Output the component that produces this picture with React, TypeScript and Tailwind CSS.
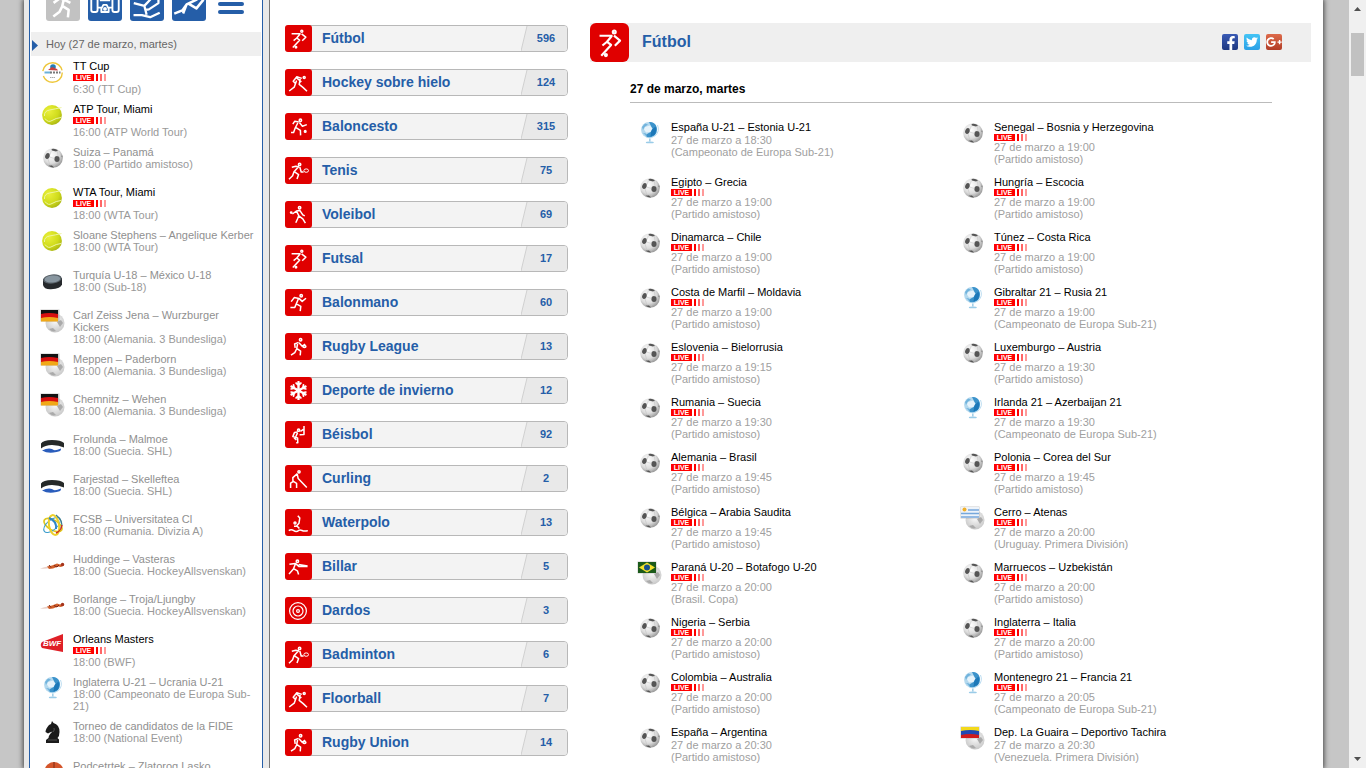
import React from 'react';
import { FaFacebookF, FaGooglePlusG, FaSnowflake, FaTwitter } from 'react-icons/fa';

type Emblem =
    | 'ball' | 'globe' | 'tennis' | 'puck' | 'de' | 'br' | 'uy' | 've'
    | 'shl' | 'orbit' | 'skater' | 'bwf' | 'knight' | 'basket' | 'ttcup';

interface Event {
    title: string;
    time: string;
    league: string;
    icon: Emblem;
    live?: boolean;
}

const today: Event[] = [
    { title: 'TT Cup', time: '6:30', league: 'TT Cup', icon: 'ttcup', live: true },
    { title: 'ATP Tour, Miami', time: '16:00', league: 'ATP World Tour', icon: 'tennis', live: true },
    { title: 'Suiza – Panamá', time: '18:00', league: 'Partido amistoso', icon: 'ball' },
    { title: 'WTA Tour, Miami', time: '18:00', league: 'WTA Tour', icon: 'tennis', live: true },
    { title: 'Sloane Stephens – Angelique Kerber', time: '18:00', league: 'WTA Tour', icon: 'tennis' },
    { title: 'Turquía U-18 – México U-18', time: '18:00', league: 'Sub-18', icon: 'puck' },
    { title: 'Carl Zeiss Jena – Wurzburger Kickers', time: '18:00', league: 'Alemania. 3 Bundesliga', icon: 'de' },
    { title: 'Meppen – Paderborn', time: '18:00', league: 'Alemania. 3 Bundesliga', icon: 'de' },
    { title: 'Chemnitz – Wehen', time: '18:00', league: 'Alemania. 3 Bundesliga', icon: 'de' },
    { title: 'Frolunda – Malmoe', time: '18:00', league: 'Suecia. SHL', icon: 'shl' },
    { title: 'Farjestad – Skelleftea', time: '18:00', league: 'Suecia. SHL', icon: 'shl' },
    { title: 'FCSB – Universitatea Cl', time: '18:00', league: 'Rumania. Divizia A', icon: 'orbit' },
    { title: 'Huddinge – Vasteras', time: '18:00', league: 'Suecia. HockeyAllsvenskan', icon: 'skater' },
    { title: 'Borlange – Troja/Ljungby', time: '18:00', league: 'Suecia. HockeyAllsvenskan', icon: 'skater' },
    { title: 'Orleans Masters', time: '18:00', league: 'BWF', icon: 'bwf', live: true },
    { title: 'Inglaterra U-21 – Ucrania U-21', time: '18:00', league: 'Campeonato de Europa Sub-21', icon: 'globe' },
    { title: 'Torneo de candidatos de la FIDE', time: '18:00', league: 'National Event', icon: 'knight' },
    { title: 'Podcetrtek – Zlatorog Lasko', time: '18:00', league: 'Eslovenia. 1. SKL', icon: 'basket' },
];

const categories: { name: string; count: number; icon: string }[] = [
    { name: 'Fútbol', count: 596, icon: 'football' },
    { name: 'Hockey sobre hielo', count: 124, icon: 'hockey' },
    { name: 'Baloncesto', count: 315, icon: 'basketball' },
    { name: 'Tenis', count: 75, icon: 'racket' },
    { name: 'Voleibol', count: 69, icon: 'volleyball' },
    { name: 'Futsal', count: 17, icon: 'football' },
    { name: 'Balonmano', count: 60, icon: 'handball' },
    { name: 'Rugby League', count: 13, icon: 'rugby' },
    { name: 'Deporte de invierno', count: 12, icon: 'winter' },
    { name: 'Béisbol', count: 92, icon: 'baseball' },
    { name: 'Curling', count: 2, icon: 'curling' },
    { name: 'Waterpolo', count: 13, icon: 'waterpolo' },
    { name: 'Billar', count: 5, icon: 'billiards' },
    { name: 'Dardos', count: 3, icon: 'darts' },
    { name: 'Badminton', count: 6, icon: 'racket' },
    { name: 'Floorball', count: 7, icon: 'hockey' },
    { name: 'Rugby Union', count: 14, icon: 'rugby' },
];

const friendly = 'Partido amistoso';
const sub21 = 'Campeonato de Europa Sub-21';

const matches: Event[] = [
    { title: 'España U-21 – Estonia U-21', time: '18:30', league: sub21, icon: 'globe' },
    { title: 'Senegal – Bosnia y Herzegovina', time: '19:00', league: friendly, icon: 'ball', live: true },
    { title: 'Egipto – Grecia', time: '19:00', league: friendly, icon: 'ball', live: true },
    { title: 'Hungría – Escocia', time: '19:00', league: friendly, icon: 'ball', live: true },
    { title: 'Dinamarca – Chile', time: '19:00', league: friendly, icon: 'ball', live: true },
    { title: 'Túnez – Costa Rica', time: '19:00', league: friendly, icon: 'ball', live: true },
    { title: 'Costa de Marfil – Moldavia', time: '19:00', league: friendly, icon: 'ball', live: true },
    { title: 'Gibraltar 21 – Rusia 21', time: '19:00', league: sub21, icon: 'globe', live: true },
    { title: 'Eslovenia – Bielorrusia', time: '19:15', league: friendly, icon: 'ball', live: true },
    { title: 'Luxemburgo – Austria', time: '19:30', league: friendly, icon: 'ball', live: true },
    { title: 'Rumania – Suecia', time: '19:30', league: friendly, icon: 'ball', live: true },
    { title: 'Irlanda 21 – Azerbaijan 21', time: '19:30', league: sub21, icon: 'globe', live: true },
    { title: 'Alemania – Brasil', time: '19:45', league: friendly, icon: 'ball', live: true },
    { title: 'Polonia – Corea del Sur', time: '19:45', league: friendly, icon: 'ball', live: true },
    { title: 'Bélgica – Arabia Saudita', time: '19:45', league: friendly, icon: 'ball', live: true },
    { title: 'Cerro – Atenas', time: '20:00', league: 'Uruguay. Primera División', icon: 'uy', live: true },
    { title: 'Paraná U-20 – Botafogo U-20', time: '20:00', league: 'Brasil. Copa', icon: 'br', live: true },
    { title: 'Marruecos – Uzbekistán', time: '20:00', league: friendly, icon: 'ball', live: true },
    { title: 'Nigeria – Serbia', time: '20:00', league: friendly, icon: 'ball', live: true },
    { title: 'Inglaterra – Italia', time: '20:00', league: friendly, icon: 'ball', live: true },
    { title: 'Colombia – Australia', time: '20:00', league: friendly, icon: 'ball', live: true },
    { title: 'Montenegro 21 – Francia 21', time: '20:05', league: sub21, icon: 'globe', live: true },
    { title: 'España – Argentina', time: '20:30', league: friendly, icon: 'ball' },
    { title: 'Dep. La Guaira – Deportivo Tachira', time: '20:30', league: 'Venezuela. Primera División', icon: 've' },
];

/* Sport pictograms, drawn on a 27x27 grid */
const figures: Record<string, React.ReactNode> = {
    football: (
        <>
            <circle cx="16.8" cy="6.2" r="1" />
            <path d="M6.600 8.800h9M15.200 8.800l-3.400 4.200 2.800 2.200-6.800 7.400M16.600 8.800l4.200 3.400-3.600 3.600M11.800 13l-3.200 2.600" />
            <circle cx="11" cy="22.200" r=".7" />
        </>
    ),
    hockey: (
        <>
            <circle cx="19.2" cy="8.4" r="1" />
            <path d="M16.8 9.4l-5-1.6-3.600 4.400 2 2M11 8.400l5.400 4.400M15.200 10l-1 5.400 4 3.200 3.800 3.600M11.600 11.600l-2.400 6.600-5 3.800" />
        </>
    ),
    basketball: (
        <>
            <circle cx="15.4" cy="7.2" r="1.2" />
            <path d="M7.8 11.2l2-3 4 .8M14.4 9.6l3 3.600 4.400-1.600M12.800 10l-2.600 5-1.600 4.600H6M11 14.600l4.400 2.800.2 5" />
            <circle cx="20.2" cy="18.4" r=".8" />
        </>
    ),
    racket: (
        <>
            <circle cx="14.6" cy="7.4" r="1.2" />
            <path d="M6.800 10.200l4-1 2.800.6-4.400 4.800 4.400 3-1.600 4.400M9 14.800l-1.400 4-3.600 3.400M14.800 10l1.400 5h2.400" />
            <ellipse cx="21.2" cy="13.6" rx="2.3" ry="1.7" strokeWidth="1" />
        </>
    ),
    volleyball: (
        <>
            <circle cx="14.6" cy="6.8" r="1.2" />
            <circle cx="6.2" cy="11.6" r=".7" />
            <path d="M7.400 13l4-3 3.400-.6 3 4.400 2 1M11.600 10.400l2.200 4.200-1.200 3.200-1.800 4M13.800 14.800l4 3 2.600 4.400" />
        </>
    ),
    handball: (
        <>
            <circle cx="16.2" cy="6.8" r="1.2" />
            <path d="M6.200 12.600l3-4 4.800.8 3.200 3 3.800-3.200M13.400 9.800l-2 4.800-1.600 3.800H5.400M11.400 14.800l4.400 2.600-.6 4.800" />
        </>
    ),
    rugby: (
        <>
            <circle cx="15.6" cy="6.8" r="1.2" />
            <path d="M13.600 9.400l-4 1.600.6 3.800M14 9.800l3.200 3.400 3-2M12.600 11l-1 5-1.800 3.600-3.800 2.600M12 15.600l3.600 2.600-.4 4.200" />
            <ellipse cx="19.4" cy="13.6" rx="1.5" ry="1" />
        </>
    ),
    baseball: (
        <>
            <circle cx="13.6" cy="9.2" r="1.1" />
            <path d="M19 5v8.400l-4.400.4M18.400 8.400l-3 2M12.800 11l-3.400.6-1.600 4 4.800 1.400.2 4.800h-1.600M12.600 11.600l-1.800 4.200M9 17l2.400 2" />
        </>
    ),
    curling: (
        <>
            <circle cx="14" cy="6.8" r="1.1" />
            <path d="M12.400 8.600L7.800 12.600l.2 4-2.400 1.600V23M8.400 16.400l3.200 2V23M12.200 9l1 4.600 8.600 9" />
        </>
    ),
    waterpolo: (
        <>
            <circle cx="10" cy="14" r="1" />
            <path d="M12.800 6.800l2 2.200-.8 5.200-2.600 3H9M12 17l2.400 2.600" />
            <path d="M3.800 21.600c2-1.600 3-1.400 5 0s3.400 1 5-.2 3 .2 4.400.6 3-.2 4.600-.2" />
        </>
    ),
    billiards: (
        <>
            <circle cx="12.4" cy="8.2" r="1.2" />
            <path d="M4.400 11.200l6-.8 3.400 3h8.800M13.600 11.600l9 1.400M10.400 11l-2 5-4.400 5M9 15.800l3.400 2 1.200 3.800" />
        </>
    ),
    darts: (
        <>
            <circle cx="13" cy="14" r="8.4" strokeWidth="1.2" />
            <circle cx="13" cy="14" r="5" strokeWidth="1.2" />
            <circle cx="13" cy="14" r="1.4" strokeWidth="1.2" />
        </>
    ),
    motor: (
        <>
            <rect x="2.600" y="8.800" width="5" height="11" rx="1.600" />
            <rect x="19.400" y="8.800" width="5" height="11" rx="1.600" />
            <path d="M9.400 10.600h8.200M7.600 16.400h2.800M16.600 16.400h2.800M10.600 19.800v-2.600l1.600-3h2.600l1.600 3v2.600z" />
            <circle cx="13.500" cy="17.400" r=".8" />
        </>
    ),
    fighter: (
        <path d="M3 12.800l8.400 2.200 5.600-6M11.400 15l1.800 7M22.600 9.400v3.400l-7.600 5-2.600.4M2.800 22.400h6.600l6.600 1.600 7.600-3.600" strokeWidth="1.800" />
    ),
    runner: (
        <path d="M1.800 21.200l6.400-2.600 3.400-4.800 8.400-4M11.600 13.800l-2.800 7.200M13.400 13.400l6 3.600 5.600-7" strokeWidth="2" />
    ),
    player: (
        <path d="M6 12.600l5-3.600 3.600 1.200 4.800 2.400M14 10.400l-1.200 5.200-2 4-5 3.800M13.200 15.200l4.800 3-.6 6" strokeWidth="2" />
    ),
};

const Figure: React.FC<{ name: string; className: string }> = ({ name, className }) => {
    if (name === 'winter') {
        return (
            <span className={`${className} flex items-center justify-center text-white`}>
                <FaSnowflake size={19} />
            </span>
        );
    }
    return (
        <svg viewBox="0 0 27 27" className={className} fill="none" stroke="#fff" strokeWidth="1.5" strokeLinejoin="round">
            {figures[name]}
        </svg>
    );
};

const flags: Record<string, React.ReactNode> = {
    de: (
        <>
            <path d="M1 1h17v4H1z" fill="#111" />
            <path d="M1 5q8-2 17 0v4H1z" fill="#d80f0f" />
            <path d="M1 9q8-2 17 0v3.500H1z" fill="#f0a818" />
        </>
    ),
    br: (
        <>
            <path d="M1 1h18v11H1z" fill="#1b5a1a" />
            <path d="M2 6.500L10 1.500l8 5-8 5z" fill="#f3e12c" />
            <circle cx="10" cy="6.500" r="3" fill="#174f8c" />
        </>
    ),
    uy: (
        <>
            <path d="M1 1h18v11H1z" fill="#edf3fa" />
            <path d="M1 4h18M1 7.500h18M1 11h18" stroke="#77a8db" strokeWidth="1.600" />
            <path d="M1 1h7v5H1z" fill="#f3f3f3" />
            <circle cx="4.500" cy="3.500" r="2" fill="#f0b02a" />
        </>
    ),
    ve: (
        <>
            <path d="M1 1h18v4H1z" fill="#f3d91c" />
            <path d="M1 5q9-2 18 0v4H1z" fill="#1f49b4" />
            <path d="M1 9q9-2 18 0v3H1z" fill="#d01c1c" />
        </>
    ),
};

const emblems: Partial<Record<Emblem, React.ReactNode>> = {
    ball: (
        <>
            <circle cx="13" cy="12" r="9.800" fill="url(#ballShade)" />
            <g fill="#555">
                <ellipse cx="7.500" cy="10" rx="2.200" ry="3" transform="rotate(25 7.500 10)" />
                <ellipse cx="17" cy="13" rx="2.600" ry="2.900" />
                <path d="M11.500 3q4-1 6.500 1.600l-2 1-4-1.200zM8.500 19.400l3.500.2 2 1.800q-3 .2-5.500-2zM22 8.500l.6 3-1-.8z" />
            </g>
            <path d="M9.500 9.500l2-5M9.500 11l5 1.500M8 13l2 6.500M17 16l-3 4M18 10.500L17.500 5" stroke="#c4c4c4" strokeWidth=".6" />
        </>
    ),
    tennis: (
        <>
            <circle cx="12" cy="12" r="9.900" fill="url(#tennisShade)" />
            <path d="M4.500 13q-.5-5 5-6t12-2.500M5 15.500q3 4.500 7 2t9-3" fill="none" stroke="#eef5a4" strokeWidth="1" />
        </>
    ),
    globe: (
        <>
            <circle cx="12" cy="8.800" r="7.900" fill="#b3d8ee" />
            <path d="M12 1q5-.5 7 3.500 2.500 5-1 9.500-4 3.500-8 2l-1.500-2 5-3 1-5z" fill="#3c93cb" />
            <path d="M14.500 9l4-3.500q1.500 4.500-1 8.500l-4 1.500z" fill="#1d78b8" />
            <path d="M8 6l5-1.500 2.500 3-2 3.500-4.500.5-2-3z" fill="#e6f3fb" />
            <path d="M5 6l3-3.500 3 1L7.500 6 6 9zM6 12l3 .5 1 3z" fill="#71b3dc" />
            <path d="M20.500 4q2.500 6-2 10.500-4 3.500-9 2" fill="none" stroke="#a9d3ec" strokeWidth=".8" />
            <path d="M12.800 17.500v3" stroke="#a3cfe8" strokeWidth="1.600" />
            <ellipse cx="12.800" cy="21.400" rx="4" ry=".9" fill="#9bcce8" />
        </>
    ),
    puck: (
        <>
            <path d="M3 10v6q1 4.500 8 4.200 10-.8 11-4.800V9z" fill="#26292c" />
            <ellipse cx="12.400" cy="10" rx="9.400" ry="4.600" fill="#596269" transform="rotate(-6 12.400 10)" />
            <ellipse cx="12.400" cy="10" rx="7.800" ry="3.500" fill="#8896a0" transform="rotate(-6 12.400 10)" />
        </>
    ),
    shl: (
        <>
            <path d="M1 10.500Q3 7 12 7t12 3v4.500q-5-2.500-12-2.500T1 15.500z" fill="#252928" />
            <path d="M2 17.500q6-3 10-1.500 2 2.500 9-.5.5 3-4.500 3.500Q8 21 2 17.500z" fill="#2a5dbc" />
        </>
    ),
    orbit: (
        <g fill="none">
            <ellipse cx="13" cy="12" rx="10" ry="5" transform="rotate(30 13 12)" stroke="#e0c81c" strokeWidth="1.600" />
            <ellipse cx="12" cy="12" rx="10" ry="5" transform="rotate(-40 12 12)" stroke="#3a9ccb" strokeWidth="1" />
            <ellipse cx="14" cy="12" rx="5" ry="10" transform="rotate(-10 14 12)" stroke="#edd02a" strokeWidth="2" />
            <path d="M16 2q8 6 5 13" stroke="#3d7c8d" strokeWidth="1.200" />
            <path d="M9 5q8 3 7 11" stroke="#2f87ca" strokeWidth="2" />
            <path d="M22 12q-1 6-6 8" stroke="#d22a22" strokeWidth="1.400" />
        </g>
    ),
    skater: (
        <>
            <path d="M0 15.500q5-2 11-2.500l-1 2q-5 1-10 .5z" fill="#e8cfc6" />
            <path d="M7 13.500l5-1 5-2 3 1 3.500-1 .5 2-3 1.500-3-.5-5 2-4 .5z" fill="#d2612c" />
            <path d="M9 12l2 2.500M14 12.500l3 1.500 2-2" stroke="#7a2415" strokeWidth="1" fill="none" />
            <circle cx="22.500" cy="11.500" r="1.700" fill="#a5341c" />
        </>
    ),
    bwf: (
        <>
            <path d="M23 1v18L2 15q-2.500-3 0-6z" fill="#df2027" />
            <text x="3" y="13" fontSize="8" fontWeight="bold" fontStyle="italic" fill="#fff">BWF</text>
        </>
    ),
    knight: (
        <>
            <path d="M12 1l1.500 2q6 1.500 6 9 0 4-2 6l1.500 1.500V23H6v-3l2.500-2q0-3 4-6.500-3 .8-4.500 2l-2.500-1.500q0-3 3.500-7L11 4z" fill="#1b1b1b" />
            <path d="M8 20h9M13 12q2-2 1-4" stroke="#5a5a5a" strokeWidth=".8" fill="none" />
        </>
    ),
    basket: (
        <>
            <circle cx="14" cy="11.500" r="9.500" fill="#d4552b" />
            <path d="M5 10q9 4 18 0M14 2v19" stroke="#7b2c17" fill="none" />
        </>
    ),
    ttcup: (
        <>
            <circle cx="12.500" cy="12.500" r="9.800" fill="#fff" stroke="#eec73c" strokeWidth="1.400" strokeDasharray="27 5" />
            <circle cx="13" cy="7" r="2.800" fill="#257cb5" />
            <path d="M8 10l4-3 5 2 1 1.500z" fill="#c74141" />
            <path d="M4.500 12.500h6" stroke="#6ab0d8" strokeWidth="2" />
            <path d="M10 12.500h10.500" stroke="#777" strokeWidth="1.800" strokeDasharray="2 1" />
            <path d="M10 17.500h5" stroke="#aaa" strokeDasharray="1.500 .5" />
        </>
    ),
};

const EmblemIcon: React.FC<{ name: Emblem }> = ({ name }) => (
    <svg viewBox="0 0 25 24" className="w-[25px] h-6 shrink-0">
        {flags[name] ? (
            <>
                <circle cx="15" cy="14" r="9.500" fill="url(#paleShade)" />
                <path d="M17 13l4-2 2 3-3 4zM9 20l4-1 3 3q-4 1.500-7-2z" fill="#aaa" />
                <path d="M.5.500h19v12H.5z" fill="#999" opacity=".5" />
                {flags[name]}
            </>
        ) : (
            emblems[name]
        )}
    </svg>
);

/* Gradients shared by all the emblems */
const Shades: React.FC = () => (
    <svg className="absolute w-0 h-0" aria-hidden="true">
        <defs>
            <radialGradient id="ballShade" cx=".4" cy=".35" r=".7">
                <stop offset="0" stopColor="#fff" />
                <stop offset=".6" stopColor="#dcdcdc" />
                <stop offset="1" stopColor="#8f8f8f" />
            </radialGradient>
            <radialGradient id="paleShade" cx=".5" cy=".4" r=".65">
                <stop offset="0" stopColor="#fafafa" />
                <stop offset="1" stopColor="#c4c4c4" />
            </radialGradient>
            <radialGradient id="tennisShade" cx=".35" cy=".3" r=".8">
                <stop offset="0" stopColor="#eaf03a" />
                <stop offset=".6" stopColor="#cfdb1c" />
                <stop offset="1" stopColor="#a3ae10" />
            </radialGradient>
        </defs>
    </svg>
);

const LiveBadge: React.FC = () => (
    <span className="flex h-[7px] gap-[2px]">
        <span className="w-[21px] bg-[#f00] text-white text-[7px] leading-[7px] font-bold text-center">LIVE</span>
        <span className="w-[2px] bg-[#f00]"></span>
        <span className="w-[2px] bg-[#f66]"></span>
        <span className="w-[2px] bg-[#f99]"></span>
    </span>
);

const Sidebar: React.FC = () => (
    <aside className="w-[246px] shrink-0 pl-[5px] pr-[6px] bg-[#e9e9e9] border-r border-[#777]">
        <div className="h-full bg-white border-x border-[#255ea8]">
            <nav className="h-[21px] pl-4 flex items-end gap-2 overflow-hidden">
                {['player', 'motor', 'fighter', 'runner'].map((name, index) => (
                    <button key={name} aria-label={name} className={index === 0 ? 'rounded-[3px] bg-[#c2c2c2]' : 'rounded-[3px] bg-[#255ea8]'}>
                        <Figure name={name} className="size-[34px]" />
                    </button>
                ))}
                <button aria-label="menu" className="ml-1 mb-[7px] w-[26px] flex flex-col gap-1">
                    <span className="h-1 rounded-full bg-[#255ea8]"></span>
                    <span className="h-1 rounded-full bg-[#255ea8]"></span>
                    <span className="h-1 rounded-full bg-[#255ea8]"></span>
                </button>
            </nav>
            <h2 className="relative mt-[11px] mx-px h-6 pl-[15px] bg-[#efefef] text-[11px] leading-6 text-[#666]">
                <svg viewBox="0 0 6 11" className="absolute left-px top-2 w-[6px] h-[11px]">
                    <path d="M0 0l6 5.500L0 11z" fill="#255ea8" />
                </svg>
                Hoy (27 de marzo, martes)
            </h2>
            <ul className="mt-1 pl-[10px] pr-[6px] flex flex-col gap-2">
                {today.map((event, index) => (
                    <li key={index} className="min-h-8">
                        <a href="#" className="flex gap-2 text-[11px] leading-3 text-[#999]">
                            <EmblemIcon name={event.icon} />
                            <span className="flex-1">
                                <span className={event.live ? 'block text-black' : 'block text-[#909090]'}>{event.title}</span>
                                {event.live && <span className="block py-[2px]"><LiveBadge /></span>}
                                <span className="block">{`${event.time} (${event.league})`}</span>
                            </span>
                        </a>
                    </li>
                ))}
            </ul>
        </div>
    </aside>
);

const Categories: React.FC = () => (
    <ul className="w-[283px] shrink-0 ml-[15px] pt-[25px] flex flex-col gap-[17px]">
        {categories.map((item) => (
            <li key={item.name}>
                <a href="#" className="flex h-[27px] rounded bg-[#f3f3f3] border border-[#b8b8b8] font-bold text-[#255ea8]">
                    <span className="-m-px w-[27px] h-[27px] shrink-0 rounded-[3px] bg-[#e00000]">
                        <Figure name={item.icon} className="size-[27px]" />
                    </span>
                    <span className="flex-1 pl-[11px] text-sm leading-[25px]">{item.name}</span>
                    <span className="relative w-[46px] shrink-0 pl-1 text-center text-[11px] leading-[25px]">
                        <svg viewBox="0 0 46 25" className="absolute inset-0 size-full">
                            <path d="M6 0h37q3 0 3 3v19q0 3-3 3H0z" fill="#e9e9e9" />
                            <path d="M6 0L0 25" stroke="#d0d0d0" />
                        </svg>
                        <span className="relative">{item.count}</span>
                    </span>
                </a>
            </li>
        ))}
    </ul>
);

const Matches: React.FC = () => (
    <main className="flex-1 ml-[22px] mr-3 pt-[23px]">
        <header className="flex items-center h-[39px] pr-[29px] bg-[#efefef]">
            <span className="size-[39px] rounded-md bg-[#e00000]">
                <Figure name="football" className="size-[39px]" />
            </span>
            <h1 className="flex-1 pl-[13px] pb-[2px] text-base font-bold text-[#255ea8]">Fútbol</h1>
            <div className="flex gap-[6px] pb-[2px] text-white">
                <a href="#" aria-label="Facebook" className="size-4 rounded-[2px] bg-linear-to-b from-[#3a5bb5] to-[#1f3880] flex items-end justify-end">
                    <FaFacebookF size={14} />
                </a>
                <a href="#" aria-label="Twitter" className="size-4 rounded-[2px] bg-linear-to-b from-[#44c4f5] to-[#2aa0e6] flex items-center justify-center">
                    <FaTwitter size={12} />
                </a>
                <a href="#" aria-label="Google+" className="size-4 rounded-[2px] bg-linear-to-b from-[#dd6a4a] to-[#b23c26] flex items-center justify-center">
                    <FaGooglePlusG size={16} />
                </a>
            </div>
        </header>
        <section className="ml-10 mr-[39px]">
            <h2 className="pt-[19px] pb-1 border-b border-[#bbb] text-xs leading-[17px] font-bold text-black">27 de marzo, martes</h2>
            <ul className="mt-[18px] grid grid-cols-2 gap-x-1 gap-y-[11px]">
                {matches.map((event, index) => (
                    <li key={index} className="min-h-11 pl-[7px]">
                        <a href="#" className="flex gap-[9px] text-[11px] leading-3 text-[#a0a0a0]">
                            <EmblemIcon name={event.icon} />
                            <span>
                                <span className="block leading-[13px] text-black">{event.title}</span>
                                {event.live && <LiveBadge />}
                                <span className="block">{`27 de marzo a ${event.time}`}</span>
                                <span className="block">{`(${event.league})`}</span>
                            </span>
                        </a>
                    </li>
                ))}
            </ul>
        </section>
    </main>
);

const Scrollbar: React.FC = () => (
    <div className="w-[17px] shrink-0 bg-[#f0f0f0] flex flex-col items-center">
        <svg viewBox="0 0 17 17" className="w-[17px] h-[17px]">
            <path d="M5 11l3.500-4 3.500 4z" fill="#505050" />
        </svg>
        <div className="mt-4 w-[13px] h-[43px] bg-[#c1c1c1]"></div>
        <svg viewBox="0 0 17 17" className="mt-auto w-[17px] h-[17px]">
            <path d="M5 6l3.500 4L12 6z" fill="#505050" />
        </svg>
    </div>
);

export default function App() {
    return (
        <div className="h-screen flex overflow-hidden bg-[#c6c6c6] font-['Liberation_Sans',Arial,sans-serif]">
            <Shades />
            <div className="flex-1 ml-6 mr-[26px] flex bg-white shadow-[0_0_5px_1px_#444]">
                <Sidebar />
                <Categories />
                <Matches />
            </div>
            <Scrollbar />
        </div>
    );
}
